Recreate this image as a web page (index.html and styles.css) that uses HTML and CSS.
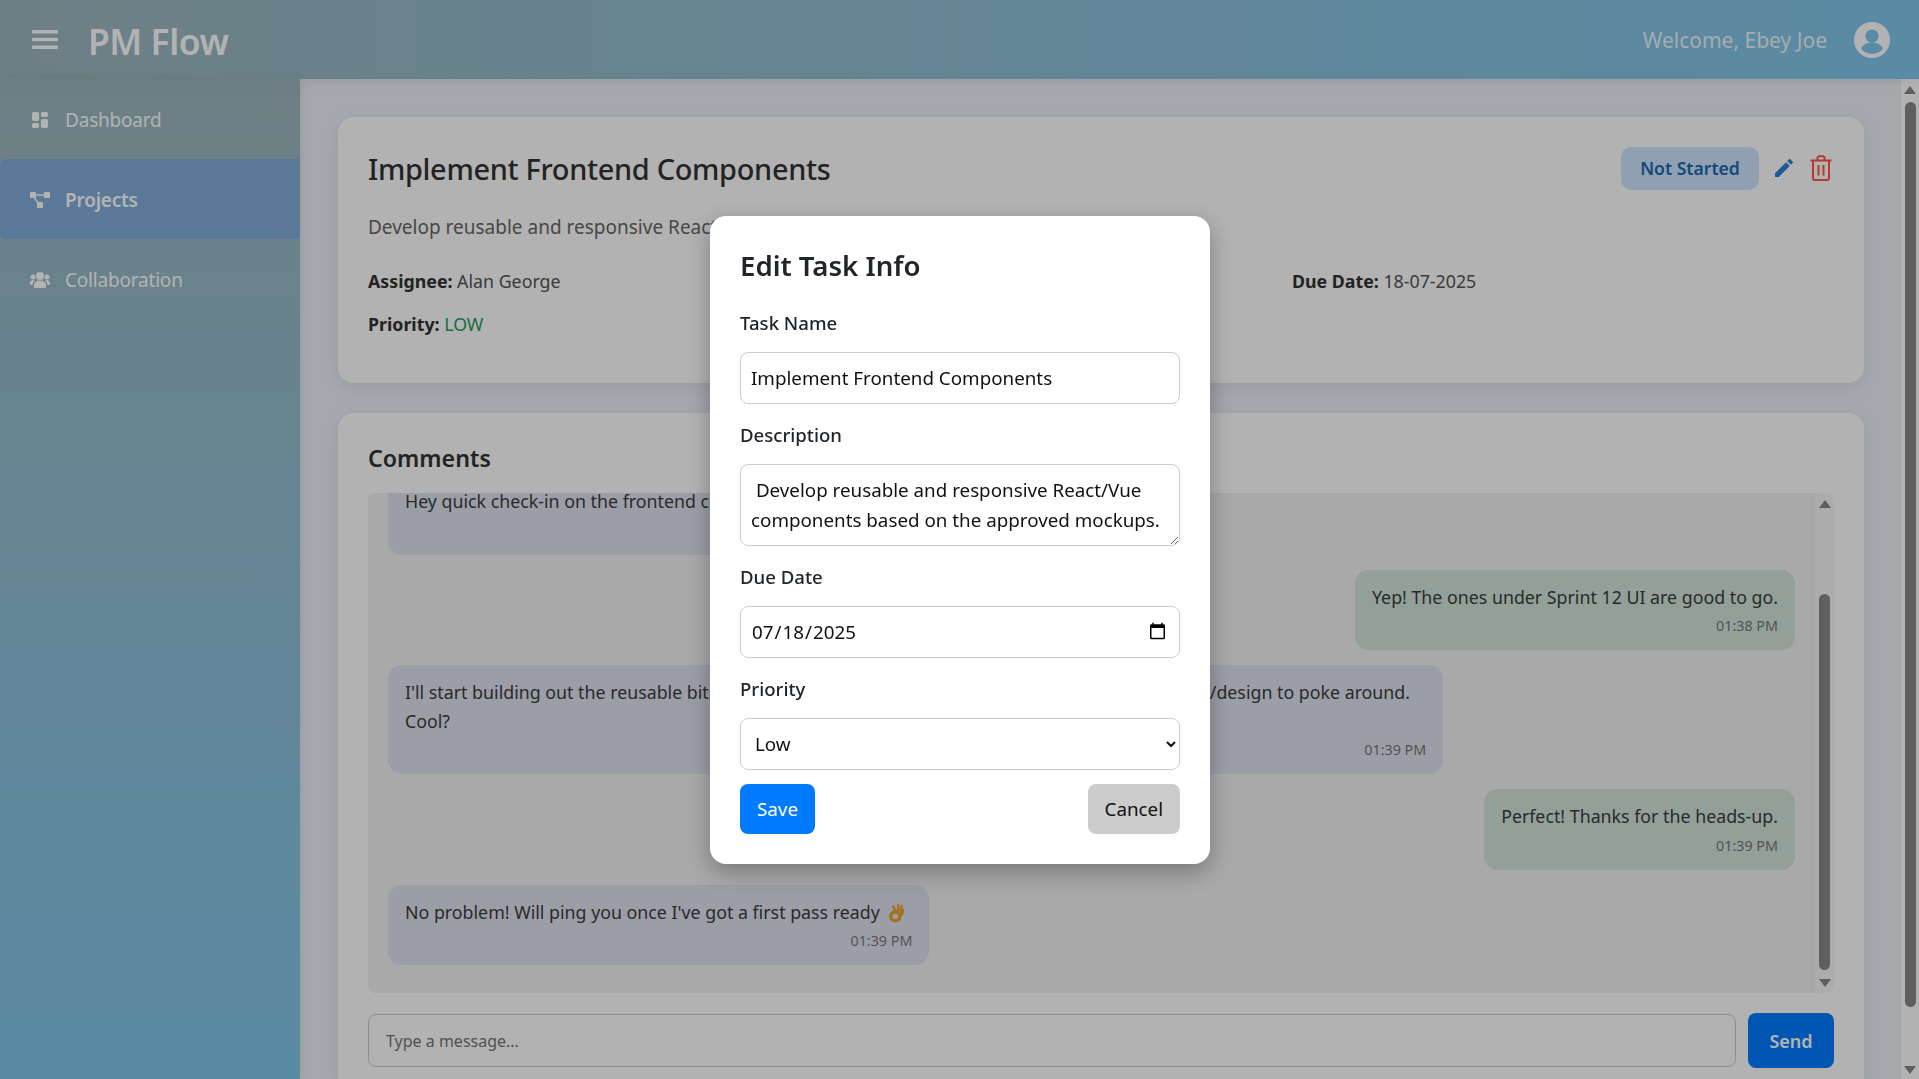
FILE: index.html
```html
<!DOCTYPE html>
<html>
  <head>
    <meta charset="UTF-8" />
    <title>PM Flow</title>
    <link rel="stylesheet" href="styles.css">
  </head>
  <body>
    <header class="topbar">
      <svg class="menu-icon" width="26" height="19" viewBox="0 0 26 19" fill="currentColor">
        <rect y="0" width="26" height="3.6" rx="1"/>
        <rect y="7.7" width="26" height="3.6" rx="1"/>
        <rect y="15.4" width="26" height="3.6" rx="1"/>
      </svg>
      <div class="logo">PM Flow</div>
      <div class="welcome">Welcome, Ebey Joe</div>
      <svg class="avatar" width="36" height="36" viewBox="0 0 36 36">
        <circle cx="18" cy="18" r="18" fill="#fff"/>
        <circle cx="18" cy="14" r="6.6" fill="#81c7ec"/>
        <path d="M7 27c1.5-4.6 6-6.6 11-6.6s9.5 2 11 6.6c-2.800 3-6.800 4.800-11 4.800s-8.200-1.800-11-4.800z" fill="#81c7ec"/>
      </svg>
    </header>

    <div class="layout">
      <nav class="sidebar">
        <a class="nav-item">
          <svg width="20" height="16" viewBox="0 0 20 16" fill="currentColor">
            <rect x="2" y="0" width="7" height="9" rx="1.800"/>
            <rect x="2" y="11" width="7" height="5" rx="1.800"/>
            <rect x="11" y="0" width="7" height="5" rx="1.800"/>
            <rect x="11" y="7" width="7" height="9" rx="1.800"/>
          </svg>
          <span>Dashboard</span>
        </a>
        <a class="nav-item active">
          <svg width="20" height="16" viewBox="0 0 20 16" fill="currentColor">
            <rect x="0" y="0" width="6" height="6" rx="0.800"/>
            <rect x="14" y="0" width="6" height="6" rx="0.800"/>
            <rect x="7" y="10" width="6" height="6" rx="0.800"/>
            <rect x="5" y="2.300" width="10" height="1.500"/>
            <path d="M3 5l1.400-.7 4 6-1.400.7z"/>
          </svg>
          <span>Projects</span>
        </a>
        <a class="nav-item">
          <svg width="20" height="16" viewBox="0 0 20 16" fill="currentColor">
            <circle cx="10" cy="4" r="4"/>
            <circle cx="3" cy="5" r="2.500"/>
            <circle cx="17" cy="5" r="2.500"/>
            <path d="M4 15.500v-2.500c0-3 2.500-4.500 6-4.500s6 1.500 6 4.500v2.500c0 .3-.2.5-.5.5h-11c-.3 0-.5-.2-.5-.5z"/>
            <path d="M0 11.500c0-2 1.200-3.500 3-3.500 .8 0 1.400.2 2 .6-1.300 1-2.200 2.400-2.300 4.400h-2c-.4 0-.7-.3-.7-.7zM20 11.500c0-2-1.200-3.500-3-3.500-.8 0-1.400.2-2 .6 1.300 1 2.200 2.400 2.300 4.400h2c.4 0 .7-.3.7-.7z"/>
          </svg>
          <span>Collaboration</span>
        </a>
      </nav>

      <main class="content">
        <section class="card task-card">
          <div class="task-head">
            <h1 class="task-title">Implement Frontend Components</h1>
            <div class="task-actions">
              <span class="status">Not Started</span>
              <svg class="edit-icon" width="24" height="24" viewBox="0 0 24 24" fill="currentColor">
                <path d="M3 17.250V21h3.750L17.810 9.940l-3.750-3.750L3 17.250zM20.710 7.040a1 1 0 0 0 0-1.410l-2.340-2.340a1 1 0 0 0-1.410 0l-1.830 1.830 3.750 3.750 1.830-1.830z"/>
              </svg>
              <svg class="delete-icon" width="22" height="26" viewBox="0 0 22 26" fill="none" stroke="currentColor" stroke-width="2">
                <path d="M0.500 5.500h21"/>
                <path d="M7.500 5V3.200c0-1.100.8-2 1.800-2h3.400c1 0 1.800.9 1.800 2V5"/>
                <path d="M3 6v17c0 1.100.8 2 1.800 2h12.400c1 0 1.800-.9 1.800-2V6"/>
                <path d="M8.500 10v10.500M13.500 10v10.500"/>
              </svg>
            </div>
          </div>
          <p class="task-desc">Develop reusable and responsive React/Vue components based on the approved mockups.</p>
          <div class="task-meta">
            <div><b>Assignee:</b> Alan George</div>
            <div></div>
            <div><b>Due Date:</b> 18-07-2025</div>
            <div><b>Priority:</b> <span class="low">LOW</span></div>
          </div>
        </section>

        <section class="card comments-card">
          <h2 class="comments-title">Comments</h2>
          <div class="chat">
            <div class="chat-list">
              <div class="bubble them">
                <div>Hey quick check-in on the frontend components — how's it going?</div>
                <div class="time">01:37 PM</div>
              </div>
              <div class="bubble me">
                <div>Yep! The ones under Sprint 12 UI are good to go.</div>
                <div class="time">01:38 PM</div>
              </div>
              <div class="bubble them">
                <div>I'll start building out the reusable bits first, and then I might need access to the shared repo and /design to poke around. Cool?</div>
                <div class="time">01:39 PM</div>
              </div>
              <div class="bubble me">
                <div>Perfect! Thanks for the heads-up.</div>
                <div class="time">01:39 PM</div>
              </div>
              <div class="bubble them">
                <div>No problem! Will ping you once I've got a first pass ready
                  <svg class="ok-hand" width="15" height="20" viewBox="0 0 18 24">
                    <circle cx="7.500" cy="16" r="5.500" fill="none" stroke="#f0a028" stroke-width="4"/>
                    <path d="M8 10L5 4M11 10.500V2M14 11.500l1-8M15.500 14l2-6" stroke="#f0a028" stroke-width="2.800" stroke-linecap="round"/>
                  </svg>
                </div>
                <div class="time">01:39 PM</div>
              </div>
            </div>
            <div class="chat-scroll">
              <span class="arrow up"></span>
              <span class="thumb"></span>
              <span class="arrow down"></span>
            </div>
          </div>
          <div class="chat-form">
            <input class="chat-input" type="text" placeholder="Type a message..." />
            <button class="send-btn" type="button">Send</button>
          </div>
        </section>
      </main>

      <div class="page-scroll">
        <span class="arrow up"></span>
        <span class="thumb"></span>
        <span class="arrow down"></span>
      </div>
    </div>

    <div class="overlay">
      <form class="modal">
        <h2 class="modal-title">Edit Task Info</h2>
        <label class="field-label" for="taskName">Task Name</label>
        <input class="field" type="text" id="taskName" value="Implement Frontend Components" />
        <label class="field-label" for="taskDesc">Description</label>
        <textarea class="field field-area" id="taskDesc"> Develop reusable and responsive React/Vue components based on the approved mockups.</textarea>
        <label class="field-label" for="dueDate">Due Date</label>
        <input class="field" type="date" id="dueDate" value="2025-07-18" />
        <label class="field-label" for="priority">Priority</label>
        <select class="field" id="priority">
          <option>Low</option>
          <option>Medium</option>
          <option>High</option>
        </select>
        <div class="modal-buttons">
          <button class="btn btn-save" type="button">Save</button>
          <button class="btn btn-cancel" type="button">Cancel</button>
        </div>
      </form>
    </div>
  </body>
</html>
```

FILE: styles.css
```css
* {
  box-sizing: border-box;
}
html,
body {
  height: 100%;
}
body {
  margin: 0;
  overflow: hidden;
  font-family: "Noto Sans", "Open Sans", sans-serif;
  font-size: 17.8px;
  color: #333;
  background: #edf1f8;
  display: flex;
  flex-direction: column;
}

/* Top bar */
.topbar {
  height: 79px;
  flex: none;
  display: flex;
  align-items: center;
  padding: 0 29px 0 32px;
  color: #fff;
  background: linear-gradient(90deg, #9db7be, #81c7ec);
  position: relative;
  z-index: 3;
  box-shadow: 0 2px 10px rgba(0, 0, 0, 0.08);
}
.menu-icon {
  margin-right: 30px;
}
.logo {
  padding-top: 2px;
  font-size: 35.500px;
  font-weight: 600;
  letter-spacing: -0.5px;
}
.welcome {
  margin-left: auto;
  margin-right: 27px;
  font-size: 21px;
  opacity: 0.85;
}

/* Page body */
.layout {
  flex: 1;
  min-height: 0;
  display: flex;
}
.sidebar {
  width: 300px;
  flex: none;
  color: #fff;
  background: linear-gradient(180deg, #9db7be, #81c7ec);
  position: relative;
  z-index: 4;
  box-shadow: 2px 0 10px rgba(0, 0, 0, 0.08);
}
.nav-item {
  height: 80px;
  padding: 2px 0 0 30px;
  display: flex;
  align-items: center;
  gap: 15px;
  font-size: 19px;
  letter-spacing: -0.2px;
}
.nav-item.active {
  background: #82aedc;
  border-radius: 6px 0 0 6px;
  font-weight: 600;
}
.content {
  flex: 1;
  min-width: 0;
  overflow: hidden;
  padding: 38px 37px 0 38px;
}
.card {
  background: #fff;
  border-radius: 16px;
  padding: 30px;
  box-shadow: 0 4px 20px rgba(0, 0, 0, 0.08);
}

/* Task card */
.task-card {
  height: 266px;
  margin-bottom: 30px;
}
.task-head {
  display: flex;
  align-items: center;
  justify-content: space-between;
  height: 43px;
}
.task-title {
  margin: 0;
  font-size: 28.900px;
  font-weight: 500;
  color: #333;
  letter-spacing: -0.3px;
}
.task-actions {
  display: flex;
  align-items: center;
}
.status {
  width: 138px;
  height: 43px;
  padding-bottom: 2px;
  display: flex;
  align-items: center;
  justify-content: center;
  border-radius: 10px;
  background: #cce5ff;
  color: #2268ad;
  font-size: 17.600px;
  font-weight: 600;
}
.edit-icon {
  color: #2a80d2;
  margin: -2px 14px 0 13px;
}
.delete-icon {
  color: #ff5442;
  margin: -2px 2px 0 0;
}
.task-desc {
  margin: 25px 0 0;
  height: 24px;
  line-height: 24px;
  font-size: 19px;
  color: #666;
  white-space: nowrap;
}
.task-meta {
  margin-top: 30px;
  display: grid;
  grid-template-columns: 462px 462px 1fr;
  grid-auto-rows: 43px;
  line-height: 24px;
  color: #555;
}
.task-meta b {
  font-weight: 700;
  color: #333;
}
.low {
  color: #1f9d60;
}

/* Comments */
.comments-title {
  margin: 0;
  height: 50px;
  line-height: 31px;
  font-size: 23.200px;
  font-weight: 600;
  color: #333;
}
.chat {
  height: 500px;
  display: flex;
  background: #f7f7f7;
  border-radius: 8px;
  overflow: hidden;
}
.chat-list {
  flex: 1;
  min-width: 0;
  display: flex;
  flex-direction: column;
  justify-content: flex-end;
  gap: 15px;
  padding: 0 20px 28px;
  background: #f2f2f2;
  overflow: hidden;
}
.bubble {
  flex: none;
  max-width: 75%;
  padding: 13px 17px 14px;
  border-radius: 14px;
  line-height: 28.500px;
  color: #3c3c3c;
}
.bubble.them {
  align-self: flex-start;
  background: #dfe3f0;
}
.bubble.me {
  align-self: flex-end;
  background: #d1e6db;
}
.time {
  margin-top: 5px;
  line-height: 20px;
  font-size: 14.300px;
  text-align: right;
  color: #777;
}
.ok-hand {
  vertical-align: -4px;
  margin: 0 8px 0 5px;
}
.chat-scroll,
.page-scroll {
  flex: none;
  display: flex;
  flex-direction: column;
  align-items: center;
}
.chat-scroll {
  width: 19px;
  padding: 7px 0 6px;
}
.chat-scroll .thumb {
  width: 11px;
  height: 376px;
  margin-top: 86px;
  border-radius: 6px;
  background: #888;
}
.page-scroll {
  width: 18px;
  padding: 7px 0 5px;
  background: #fff;
}
.page-scroll .thumb {
  width: 11px;
  height: 905px;
  margin-top: 8px;
  border-radius: 6px;
  background: #888;
}
.arrow {
  width: 0;
  height: 0;
  flex: none;
  border-left: 6px solid transparent;
  border-right: 6px solid transparent;
}
.arrow.up {
  border-bottom: 8px solid #888;
}
.arrow.down {
  margin-top: auto;
  border-top: 8px solid #888;
}
.chat-form {
  margin-top: 20px;
  display: flex;
  gap: 12px;
}
.chat-input {
  flex: 1;
  height: 53px;
  margin: 1px 0;
  padding: 0 17px;
  border: 1px solid #ccc;
  border-radius: 8px;
  background: #fff;
  font: 16px "Noto Sans", sans-serif;
}
.send-btn {
  width: 86px;
  height: 55px;
  border: none;
  border-radius: 8px;
  background: #007bff;
  color: #fff;
  font: 600 18px "Noto Sans", sans-serif;
}

/* Modal */
.overlay {
  position: fixed;
  inset: 0;
  z-index: 10;
  padding-left: 1px;
  display: flex;
  align-items: center;
  justify-content: center;
  background: rgba(0, 0, 0, 0.3);
}
.modal {
  width: 500px;
  height: 648px;
  padding: 30px;
  background: #fff;
  border-radius: 16px;
  box-shadow: 0 8px 24px rgba(0, 0, 0, 0.3);
  display: flex;
  flex-direction: column;
  color: #212529;
}
.modal-title {
  margin: 0 0 25px;
  height: 38px;
  line-height: 38px;
  font-size: 27.600px;
  font-weight: 600;
}
.field-label {
  height: 28px;
  line-height: 28px;
  margin-bottom: 15px;
  font-size: 18.600px;
  font-weight: 500;
}
.field {
  flex: none;
  width: 100%;
  height: 52px;
  margin-bottom: 17px;
  padding: 0 10px;
  border: 1px solid #ccc;
  border-radius: 8px;
  background: #fff;
  color: #111;
  font: 18.800px "Noto Sans", sans-serif;
}
.field-area {
  height: 82px;
  padding: 10px 10px 6px;
  line-height: 30px;
  resize: vertical;
}
select.field {
  margin-bottom: 14px;
}
.modal-buttons {
  display: flex;
  justify-content: space-between;
}
.btn {
  height: 50px;
  padding: 0 17px;
  border: none;
  border-radius: 8px;
  font: 18.800px "Noto Sans", sans-serif;
}
.btn-save {
  background: #007bff;
  color: #fff;
}
.btn-cancel {
  background: #ccc;
  color: #111;
}
```
